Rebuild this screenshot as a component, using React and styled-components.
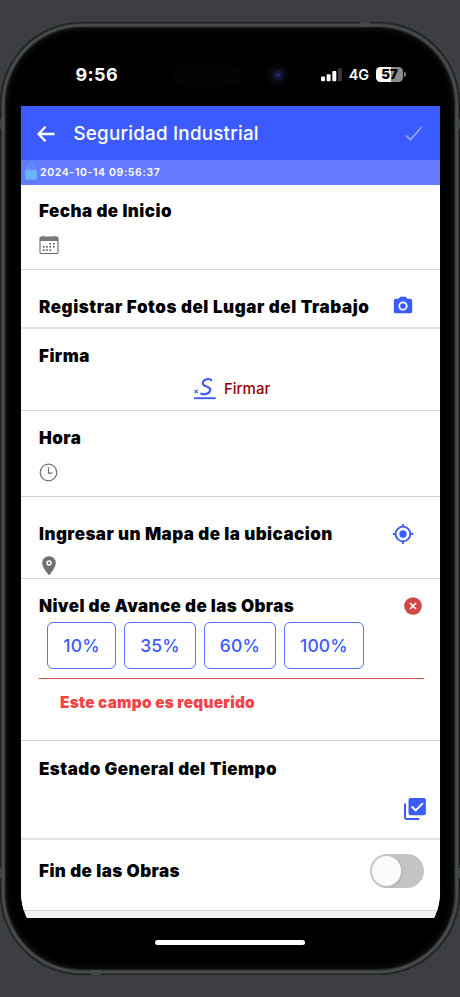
import React from "react";
import styled, { createGlobalStyle } from "styled-components";

const Global = createGlobalStyle`
  *, *::before, *::after { box-sizing: border-box; }
  html, body { margin: 0; padding: 0; background: #3d3e42; }
  body { overflow: hidden; font-family: Inter, "Liberation Sans", sans-serif; }
  svg { display: block; flex: none; }
`;

const Stage = styled.div`
  width: 460px;
  height: 997px;
  padding-top: 22px;
  background: #3d3e42;
`;

const Device = styled.div`
  position: relative;
  width: 460px;
  height: 953px;
  padding: 21px 20px 21px 20.5px;
  border-radius: 82px;
  background: #000;
  box-shadow: inset 0 0 0 1px #1e2122, inset 0 0 0 2px #303435,
    inset 0 0 0 4px #484c4d, inset 0 0 0 5px #3a3e3f, inset 0 0 0 6px #1b1d1d,
    inset 0 0 7px 6px #1c1c1c;
`;

const Antenna = styled.i`
  position: absolute;
  left: ${(p) => p.$x}px;
  top: ${(p) => p.$y}px;
  width: ${(p) => (p.$flat ? 10 : 5)}px;
  height: ${(p) => (p.$flat ? 5 : 10)}px;
  background: #464c4d;
  opacity: 0.8;
`;

const Screen = styled.div`
  display: flex;
  flex-direction: column;
  height: 911px;
  border-radius: 62px;
  overflow: hidden;
  background: #000;
  box-shadow: 0 0 0 1px #060606;
`;

const StatusBar = styled.div`
  position: relative;
  display: flex;
  flex: none;
  align-items: center;
  height: 63px;
  padding: 0 37px 0 55px;
  color: #fff;
`;

const Clock = styled.span`
  flex: 1;
  font-size: 18px;
  line-height: 24px;
  font-weight: 700;
  letter-spacing: 0.4px;
`;

const Network = styled.span`
  margin: 0 7px 0 7px;
  font-size: 14.4px;
  line-height: 18px;
  font-weight: 600;
`;

const Battery = styled.span`
  position: relative;
  width: 27px;
  height: 15px;
  border-radius: 4.5px;
  background: linear-gradient(90deg, #fff 57%, #8c8c8c 57%);
  color: #000;
  font-size: 13.2px;
  line-height: 15px;
  font-weight: 900;
  text-align: center;
  &::after {
    content: "";
    position: absolute;
    left: 28px;
    top: 5px;
    width: 1.5px;
    height: 5px;
    border-radius: 0 2px 2px 0;
    background: #777;
  }
`;

const Island = styled.div`
  position: absolute;
  left: 142.5px;
  top: 12px;
  width: 134px;
  height: 40px;
  border: 1px solid #060606;
  border-radius: 20px;
  background: #000;
`;

const Sensor = styled.i`
  position: absolute;
  left: 8px;
  top: 7px;
  width: 69px;
  height: 24px;
  border-radius: 12px;
  background: #040404;
`;

const Lens = styled.i`
  position: absolute;
  left: 103px;
  top: 8px;
  width: 22px;
  height: 22px;
  border-radius: 50%;
  background: radial-gradient(circle, #24266b 0 1.5px, #11132f 3px 5px, #0b0812 6px, #070508 10px);
`;

const AppBar = styled.header`
  display: flex;
  flex: none;
  align-items: center;
  height: 53.5px;
  padding: 1.5px 16.5px 0 15.5px;
  background: #3b5bfe;
  color: #fff;
`;

const Title = styled.h1`
  flex: 1;
  margin: 0 0 0 17.5px;
  font-size: 18.8px;
  line-height: 26px;
  font-weight: 500;
  letter-spacing: 0.23px;
`;

const Stamp = styled.div`
  display: flex;
  flex: none;
  align-items: center;
  gap: 3.5px;
  height: 25.5px;
  padding-left: 4px;
  background: #657bff;
  color: #fff;
  font-size: 10.5px;
  font-weight: 600;
  letter-spacing: 0.63px;
`;

const Form = styled.main`
  flex: none;
  height: 733px;
  overflow: hidden;
  background: #f1f1f1;
`;

const Field = styled.section`
  height: ${(p) => p.$h}px;
  padding: ${(p) => p.$top}px 16px 0 18.5px;
  border-bottom: ${(p) => p.$line || 1}px solid ${(p) => (p.$line ? "#e3e3e3" : "#d2d2d2")};
  background: #fff;
`;

const FieldHead = styled.div`
  display: flex;
  align-items: center;
  justify-content: space-between;
  height: 24px;
  padding-right: ${(p) => p.$inset || 0}px;
`;

const Label = styled.h2`
  margin: 0;
  padding-top: ${(p) => p.$drop || 0}px;
  font-size: 17px;
  line-height: 24px;
  font-weight: 900;
  letter-spacing: ${(p) => p.$track || 0.45}px;
  color: #000;
  white-space: nowrap;
`;

const Value = styled.div`
  display: flex;
  margin: ${(p) => p.$gap}px ${(p) => (p.$end ? -1.5 : 0)}px 0 0;
  padding-left: ${(p) => p.$indent || 0}px;
  justify-content: ${(p) => (p.$end ? "flex-end" : "flex-start")};
`;

const SignButton = styled.button`
  display: flex;
  align-items: center;
  gap: 8px;
  margin: 9px 0 0 155px;
  padding: 0;
  border: 0;
  background: none;
  color: #980006;
  font: 500 15px/24px Inter, sans-serif;
`;

const Options = styled.div`
  display: flex;
  gap: 8.3px;
  margin: 4px 0 9.5px 8px;
`;

const Option = styled.button`
  width: ${(p) => p.$w}px;
  height: 47px;
  padding: 1px 0 0;
  border: 1px solid #5571ff;
  border-radius: 6px;
  background: #fff;
  color: #3b5bfe;
  font: 500 17.5px/24px Inter, sans-serif;
  letter-spacing: 0.15px;
`;

const ErrorNote = styled.p`
  margin: 0;
  padding: 12px 0 0 21px;
  border-top: 1.5px solid #d9504e;
  color: #f04444;
  font-size: 15.3px;
  line-height: 24px;
  font-weight: 900;
  letter-spacing: 0.28px;
`;

const Switch = styled.span`
  display: flex;
  flex: none;
  align-items: center;
  width: 54.5px;
  height: 34px;
  padding-left: 2px;
  border-radius: 17px;
  background: #c4c4c4;
  &::before {
    content: "";
    width: 29.5px;
    height: 29.5px;
    border-radius: 50%;
    background: #fafafa;
    box-shadow: 1px 1px 3px rgba(0, 0, 0, 0.12);
  }
`;

const HomeArea = styled.footer`
  display: flex;
  flex: 1;
  justify-content: center;
  padding-top: 21.5px;
  background: #000;
`;

const HomeBar = styled.i`
  width: 150px;
  height: 5.5px;
  border-radius: 3px;
  background: #fff;
`;

const SignalIcon = () => (
  <svg width="21" height="14" viewBox="0 0 21 14" fill="#fff">
    <rect x="0" y="8.6" width="4" height="4.7" rx="1" />
    <rect x="5.6" y="6.2" width="4" height="7.1" rx="1" />
    <rect x="11.3" y="3" width="4" height="10.3" rx="1" />
    <rect x="16.8" y="0.2" width="4" height="13.1" rx="1" fill="#3a3a3a" />
  </svg>
);

const BackIcon = () => (
  <svg width="20" height="18" viewBox="0 0 20 18" fill="none" stroke="#fff" strokeWidth="2.3">
    <path d="M9.5 1.7 2.6 9l6.9 7.3M2.6 9h16" />
  </svg>
);

const CheckIcon = () => (
  <svg width="20" height="17" viewBox="0 0 20 17" fill="none" stroke="#a9b6ff" strokeWidth="1.3">
    <path d="m1.9 10.2 4.6 4.6L18 1.6" />
  </svg>
);

const LockIcon = () => (
  <svg width="12" height="18" viewBox="0 0 12 18">
    <path d="M3.3 7V4a2.8 2.8 0 0 1 5.6 0V5.2" fill="none" stroke="#56a1f6" strokeWidth="1.2" />
    <rect x="0" y="6.4" width="12" height="10.3" rx="2" fill="#66b5fa" />
  </svg>
);

const CalendarIcon = () => (
  <svg width="20" height="20" viewBox="0 0 20 20">
    <rect x="1" y="2" width="18" height="16.5" rx="1.3" fill="#fff" stroke="#696969" strokeWidth="1.1" />
    <path d="M1 2h18v4H1z" fill="#777" />
    <path d="M4.5.7v2.2M15.5.7v2.2" stroke="#777" strokeWidth="1.3" />
    <g fill="#555">
      {[[10.5, 8], [14, 8], [4, 11], [7.2, 11], [10.5, 11], [14, 11], [4, 14.3], [7.2, 14.3], [10.5, 14.3]].map(
        ([x, y]) => <rect key={`${x}-${y}`} x={x} y={y} width="1.6" height="1.6" />
      )}
    </g>
  </svg>
);

const CameraIcon = () => (
  <svg width="22" height="22" viewBox="0 0 24 24" fill="#3b5bfe">
    <circle cx="12" cy="12" r="3.1" />
    <path d="M9 2 7.17 4H4c-1.1 0-2 .9-2 2v12c0 1.1.9 2 2 2h16c1.1 0 2-.9 2-2V6c0-1.1-.9-2-2-2h-3.17L15 2H9zm3 15c-2.76 0-5-2.24-5-5s2.24-5 5-5 5 2.24 5 5-2.24 5-5 5z" />
  </svg>
);

const SignatureIcon = () => (
  <svg width="22" height="24" viewBox="0 0 22 24" fill="none" stroke="#3b5bfe">
    <path d="M17.3 3.2C15.9 1.1 9.1 2 8.8 6.2 8.5 10 17 9.2 16.3 13.1 15.8 16.5 10.5 18 7.2 16.7" strokeWidth="2.1" strokeLinecap="round" />
    <path d="m.7 12.8 3.1 3.4M3.8 12.8.7 16.2" strokeWidth="1.1" />
    <path d="M0 21.2h21.7" strokeWidth="1.9" />
  </svg>
);

const HourIcon = () => (
  <svg width="19" height="19" viewBox="0 0 19 19" fill="none" stroke="#707070" strokeWidth="1.2">
    <circle cx="9.5" cy="9.5" r="8.3" />
    <path d="M9.5 4.3v5.8h4" />
  </svg>
);

const LocateIcon = () => (
  <svg width="22" height="22" viewBox="0 0 24 24" fill="#3b5bfe">
    <path d="M12 8a4 4 0 1 0 0 8 4 4 0 0 0 0-8zm8.94 3A8.99 8.99 0 0 0 13 3.06V1h-2v2.06A8.99 8.99 0 0 0 3.06 11H1v2h2.06A8.99 8.99 0 0 0 11 20.94V23h2v-2.06A8.99 8.99 0 0 0 20.94 13H23v-2h-2.06zM12 19a7 7 0 1 1 0-14 7 7 0 0 1 0 14z" />
  </svg>
);

const PinIcon = () => (
  <svg width="14" height="20" viewBox="0 0 14 20">
    <path d="M7 .2C3.1.2.2 3.2.2 6.9.2 11.9 7 19.2 7 19.2s6.8-7.3 6.8-12.3C13.8 3.2 10.9.2 7 .2z" fill="#707070" />
    <circle cx="7" cy="7" r="2" fill="#707070" stroke="#fff" strokeWidth="1.4" />
  </svg>
);

const ClearIcon = () => (
  <svg width="18" height="18" viewBox="0 0 18 18">
    <circle cx="9" cy="9" r="8.8" fill="#d04744" />
    <path d="m6 6 6 6m0-6-6 6" stroke="#fff" strokeWidth="1.6" />
  </svg>
);

const ChecklistIcon = () => (
  <svg width="22" height="22" viewBox="0 0 22 22">
    <path d="M1 5.4v14.2c0 .8.5 1.3 1.3 1.3H15.2" fill="none" stroke="#3b5bfe" strokeWidth="2" />
    <rect x="4.5" y="0" width="17.3" height="17.3" rx="2" fill="#3b5bfe" />
    <path d="m7.7 8.5 4 4 7.2-7.3" fill="none" stroke="#fff" strokeWidth="1.9" />
  </svg>
);

const levels = [["10%", 69], ["35%", 71.5], ["60%", 71.5], ["100%", 80]];

export default function App() {
  return (
    <Stage>
      <Global />
      <Device>
        <Antenna $x={0} $y={97} />
        <Antenna $x={455} $y={97} />
        <Antenna $x={0} $y={846} />
        <Antenna $x={455} $y={846} />
        <Antenna $flat $x={360} $y={0} />
        <Antenna $flat $x={91} $y={948} />
        <Screen>
          <StatusBar>
            <Clock>9:56</Clock>
            <Island>
              <Sensor />
              <Lens />
            </Island>
            <SignalIcon />
            <Network>4G</Network>
            <Battery>57</Battery>
          </StatusBar>
          <AppBar>
            <BackIcon />
            <Title>Seguridad Industrial</Title>
            <CheckIcon />
          </AppBar>
          <Stamp>
            <LockIcon />
            2024-10-14 09:56:37
          </Stamp>
          <Form>
            <Field $h={84.5} $top={14}>
              <Label>Fecha de Inicio</Label>
              <Value $gap={12}><CalendarIcon /></Value>
            </Field>
            <Field $h={59.5} $top={24.5} $line={2}>
              <FieldHead $inset={10.5}>
                <Label $track={0.56} $drop={1.5}>Registrar Fotos del Lugar del Trabajo</Label>
                <CameraIcon />
              </FieldHead>
            </Field>
            <Field $h={81.5} $top={14.5}>
              <Label>Firma</Label>
              <SignButton><SignatureIcon />Firmar</SignButton>
            </Field>
            <Field $h={86.5} $top={15.5}>
              <Label>Hora</Label>
              <Value $gap={13}><HourIcon /></Value>
            </Field>
            <Field $h={81.5} $top={25}>
              <FieldHead $inset={10.5}>
                <Label>Ingresar un Mapa de la ubicacion</Label>
                <LocateIcon />
              </FieldHead>
              <Value $gap={9.5} $indent={3}><PinIcon /></Value>
            </Field>
            <Field $h={162.5} $top={15}>
              <FieldHead $inset={2.5}>
                <Label $track={0.38}>Nivel de Avance de las Obras</Label>
                <ClearIcon />
              </FieldHead>
              <Options>
                {levels.map(([text, w]) => <Option key={text} $w={w}>{text}</Option>)}
              </Options>
              <ErrorNote>Este campo es requerido</ErrorNote>
            </Field>
            <Field $h={98.5} $top={15.5} $line={2}>
              <Label>Estado General del Tiempo</Label>
              <Value $gap={17.5} $end><ChecklistIcon /></Value>
            </Field>
            <Field $h={71.5} $top={19.5}>
              <FieldHead>
                <Label>Fin de las Obras</Label>
                <Switch />
              </FieldHead>
            </Field>
          </Form>
          <HomeArea><HomeBar /></HomeArea>
        </Screen>
      </Device>
    </Stage>
  );
}
